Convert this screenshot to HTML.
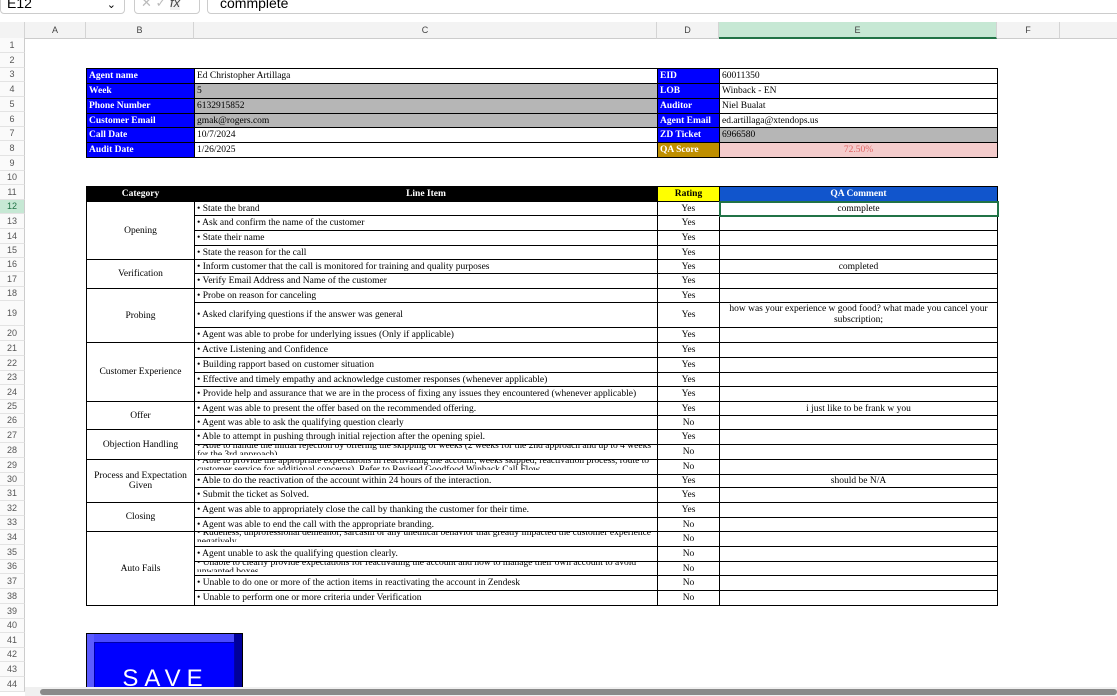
<!DOCTYPE html>
<html><head><style>
body{margin:0;width:1117px;height:696px;overflow:hidden;background:#fff;position:relative;font-family:"Liberation Serif",serif;}
.abs{position:absolute}
.ch{position:absolute;top:22px;height:16px;border-right:1px solid #d4d4d4;font:9px "Liberation Sans",sans-serif;color:#444;text-align:center;line-height:16px;background:#f3f3f3;border-bottom:1px solid #ccc}
.rh{position:absolute;left:0;width:24px;border-bottom:1px solid #e3e3e3;font:9px "Liberation Sans",sans-serif;color:#555;text-align:center;background:#fafafa;border-right:1px solid #ccc}
table{border-collapse:collapse;table-layout:fixed;position:absolute;left:86px;font-size:9.5px}
td{border:1px solid #000;padding:0 2px;white-space:nowrap;overflow:hidden;line-height:10px}
.l{background:#0000ff;color:#fff;font-weight:bold}
.g{background:#b6b6b6}
.c{text-align:center}
.w{white-space:normal;line-height:9px;vertical-align:top}
</style></head><body>
<div class="abs" style="left:0;top:-6px;width:125px;height:20px;border:1px solid #ccc;border-radius:4px;font:14px 'Liberation Sans',sans-serif;line-height:16px;padding-left:6px;box-sizing:border-box">E12<span style="position:absolute;right:8px;top:2px;font-size:11px">&#8964;</span></div>
<div class="abs" style="left:134px;top:-6px;width:66px;height:20px;border:1px solid #ccc;border-radius:4px;font:13px 'Liberation Sans';color:#bbb;line-height:16px;padding-left:6px;box-sizing:border-box">✕ ✓ <span style="color:#444;font-style:italic;background:#eee">fx</span></div>
<div class="abs" style="left:207px;top:-6px;width:920px;height:20px;border:1px solid #ccc;border-radius:4px;font:14px 'Liberation Sans';line-height:16px;padding-left:12px;box-sizing:border-box">commplete</div>
<div class="ch" style="left:0;width:24px"></div>
<div class="ch" style="left:25px;width:60px">A</div>
<div class="ch" style="left:86px;width:107px">B</div>
<div class="ch" style="left:194px;width:462px">C</div>
<div class="ch" style="left:657px;width:61px">D</div>
<div class="ch" style="left:719px;width:277px;background:#c6e8d4;border-bottom:2px solid #217346;height:15px">E</div>
<div class="ch" style="left:997px;width:62px">F</div>
<div class="ch" style="left:1060px;width:57px;border-right:0"></div>
<div id="rows"></div>
<script>
var h=[15,15,14,15,15,15,14,15,15,14,15,14,15,15,14,14,15,14,25,15,15,15,14,15,14,14,15,15,15,13,15,15,14,15,15,14,15,15,15,14,15,14,15,15];
var y=38,s='';for(var i=0;i<44;i++){s+='<div class="rh" style="top:'+y+'px;height:'+(h[i]-1)+'px;line-height:'+(h[i]-1)+'px;'+(i==11?'background:#c6e8d4;color:#217346':'')+'">'+(i+1)+'</div>';y+=h[i];}
document.getElementById('rows').innerHTML=s;
</script>
<table style="top:68px;width:911px">
<col style="width:108px"><col style="width:463px"><col style="width:62px"><col style="width:278px">
<tr style="height:15px"><td class="l">Agent name</td><td>Ed Christopher Artillaga</td><td class="l">EID</td><td>60011350</td></tr>
<tr style="height:15px"><td class="l">Week</td><td class="g">5</td><td class="l">LOB</td><td>Winback - EN</td></tr>
<tr style="height:15px"><td class="l">Phone Number</td><td class="g">6132915852</td><td class="l">Auditor</td><td>Niel Bualat</td></tr>
<tr style="height:14px"><td class="l">Customer Email</td><td class="g">gmak@rogers.com</td><td class="l">Agent Email</td><td>ed.artillaga@xtendops.us</td></tr>
<tr style="height:15px"><td class="l">Call Date</td><td>10/7/2024</td><td class="l">ZD Ticket</td><td class="g">6966580</td></tr>
<tr style="height:15px"><td class="l">Audit Date</td><td>1/26/2025</td><td class="l" style="background:#bf8f00">QA Score</td><td class="c" style="background:#f4cccc;color:#e06666">72.50%</td></tr>
</table>
<table style="top:186px;width:911px">
<col style="width:108px"><col style="width:463px"><col style="width:62px"><col style="width:278px">
<tr style="height:15px;font-weight:bold"><td class="c" style="background:#000;color:#fff">Category</td><td class="c" style="background:#000;color:#fff">Line Item</td><td class="c" style="background:#ff0;color:#000">Rating</td><td class="c" style="background:#1155cc;color:#fff">QA Comment</td></tr>
<tr style="height:14px"><td rowspan="4" class="c">Opening</td><td>• State the brand</td><td class="c">Yes</td><td class="c" style="border:2px solid #217346">commplete</td></tr>
<tr style="height:15px"><td>• Ask and confirm the name of the customer</td><td class="c">Yes</td><td></td></tr>
<tr style="height:15px"><td>• State their name</td><td class="c">Yes</td><td></td></tr>
<tr style="height:14px"><td>• State the reason for the call</td><td class="c">Yes</td><td></td></tr>
<tr style="height:14px"><td rowspan="2" class="c">Verification</td><td>• Inform customer that the call is monitored for training and quality purposes</td><td class="c">Yes</td><td class="c">completed</td></tr>
<tr style="height:15px"><td>• Verify Email Address and Name of the customer</td><td class="c">Yes</td><td></td></tr>
<tr style="height:14px"><td rowspan="3" class="c">Probing</td><td>• Probe on reason for canceling</td><td class="c">Yes</td><td></td></tr>
<tr style="height:25px"><td>• Asked clarifying questions if the answer was general</td><td class="c">Yes</td><td class="c" style="white-space:normal;line-height:11px">how was your experience w good food? what made you cancel your subscription;</td></tr>
<tr style="height:15px"><td>• Agent was able to probe for underlying issues (Only if applicable)</td><td class="c">Yes</td><td></td></tr>
<tr style="height:15px"><td rowspan="4" class="c">Customer Experience</td><td>• Active Listening and Confidence</td><td class="c">Yes</td><td></td></tr>
<tr style="height:15px"><td>• Building rapport based on customer situation</td><td class="c">Yes</td><td></td></tr>
<tr style="height:14px"><td>• Effective and timely empathy and acknowledge customer responses (whenever applicable)</td><td class="c">Yes</td><td></td></tr>
<tr style="height:15px"><td>• Provide help and assurance that we are in the process of fixing any issues they encountered (whenever applicable)</td><td class="c">Yes</td><td></td></tr>
<tr style="height:14px"><td rowspan="2" class="c">Offer</td><td>• Agent was able to present the offer based on the recommended offering.</td><td class="c">Yes</td><td class="c">i just like to be frank w you</td></tr>
<tr style="height:14px"><td>• Agent was able to ask the qualifying question clearly</td><td class="c">No</td><td></td></tr>
<tr style="height:15px"><td rowspan="2" class="c">Objection Handling</td><td>• Able to attempt in pushing through initial rejection after the opening spiel.</td><td class="c">Yes</td><td></td></tr>
<tr style="height:15px"><td class="w"><div style="height:13px;overflow:hidden;margin-top:-3px">• Able to handle the initial rejection by offering the skipping of weeks (2 weeks for the 2nd approach and up to 4 weeks for the 3rd approach)</div></td><td class="c">No</td><td></td></tr>
<tr style="height:15px"><td rowspan="3" class="c" style="white-space:normal">Process and Expectation Given</td><td class="w"><div style="height:13px;overflow:hidden;margin-top:-3px">• Able to provide the appropriate expectations in reactivating the account, weeks skipped, reactivation process, route to customer service for additional concerns). Refer to Revised Goodfood Winback Call Flow</div></td><td class="c">No</td><td></td></tr>
<tr style="height:13px"><td>• Able to do the reactivation of the account within 24 hours of the interaction.</td><td class="c">Yes</td><td class="c">should be N/A</td></tr>
<tr style="height:15px"><td>• Submit the ticket as Solved.</td><td class="c">Yes</td><td></td></tr>
<tr style="height:15px"><td rowspan="2" class="c">Closing</td><td>• Agent was able to appropriately close the call by thanking the customer for their time.</td><td class="c">Yes</td><td></td></tr>
<tr style="height:14px"><td>• Agent was able to end the call with the appropriate branding.</td><td class="c">No</td><td></td></tr>
<tr style="height:15px"><td rowspan="5" class="c">Auto Fails</td><td class="w"><div style="height:13px;overflow:hidden;margin-top:-3px">• Rudeness, unprofessional demeanor, sarcasm or any unethical behavior that greatly impacted the customer experience negatively</div></td><td class="c">No</td><td></td></tr>
<tr style="height:15px"><td>• Agent unable to ask the qualifying question clearly.</td><td class="c">No</td><td></td></tr>
<tr style="height:14px"><td class="w"><div style="height:13px;overflow:hidden;margin-top:-3px">• Unable to clearly provide expectations for reactivating the account and how to manage their own account to avoid unwanted boxes</div></td><td class="c">No</td><td></td></tr>
<tr style="height:15px"><td>• Unable to do one or more of the action items in reactivating the account in Zendesk</td><td class="c">No</td><td></td></tr>
<tr style="height:15px"><td>• Unable to perform one or more criteria under Verification</td><td class="c">No</td><td></td></tr>
</table>
<div class="abs" style="left:86px;top:633px;width:157px;height:63px;background:#0000ff;border:1px solid #000;box-sizing:border-box;overflow:hidden">
<div class="abs" style="left:0;top:0;width:157px;height:8px;background:#4a4aff"></div>
<div class="abs" style="left:0;top:0;width:7px;height:64px;background:#5b5bff"></div>
<div class="abs" style="right:0;top:0;width:8px;height:64px;background:#00009c"></div>
<div class="abs" style="left:7px;top:8px;width:141px;height:60px;background:#0000ff;border:1px solid #0000aa;box-sizing:border-box"></div>
<div class="abs" style="left:0;width:157px;top:31px;text-align:center;color:#fff;font:24px 'Liberation Sans',sans-serif;letter-spacing:6px">SAVE</div>
</div>
<div class="abs" style="left:25px;top:687px;width:1092px;height:9px;background:#f0f0f0"></div>
<div class="abs" style="left:40px;top:689px;width:1077px;height:6px;background:#8a8a8a;border-radius:3px"></div>
</body></html>
